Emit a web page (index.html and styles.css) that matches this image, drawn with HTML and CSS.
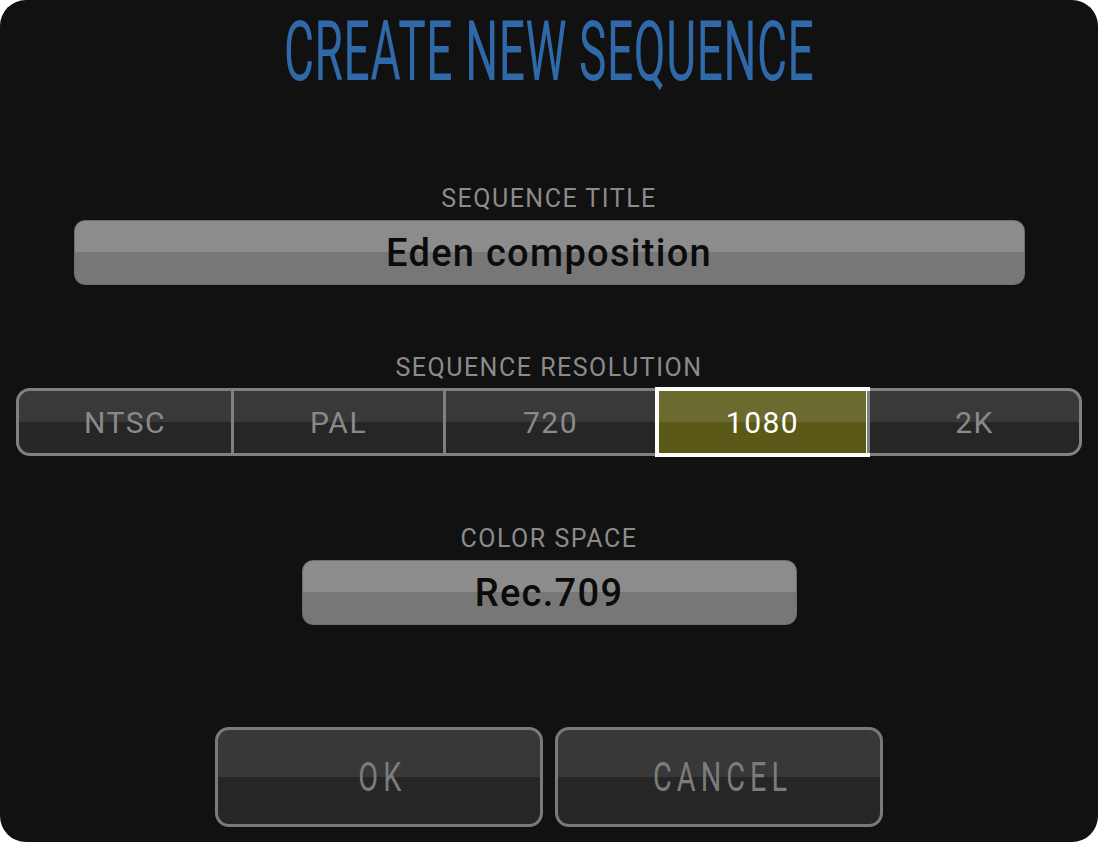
FILE: index.html
```html
<!DOCTYPE html>
<html>
<head>
<meta charset="utf-8">
<link rel="stylesheet" href="styles.css">
</head>
<body>
<div class="dialog">
  <h1 class="title"><span class="title-text">CREATE NEW SEQUENCE</span></h1>

  <div class="label label-first">SEQUENCE TITLE</div>
  <div class="field field-wide">Eden composition</div>

  <div class="label">SEQUENCE RESOLUTION</div>
  <div class="segmented">
    <div class="seg">NTSC</div>
    <div class="seg">PAL</div>
    <div class="seg">720</div>
    <div class="seg seg-selected">1080</div>
    <div class="seg">2K</div>
  </div>

  <div class="label">COLOR SPACE</div>
  <div class="field field-narrow">Rec.709</div>

  <div class="actions">
    <div class="btn"><span class="btn-text">OK</span></div>
    <div class="btn"><span class="btn-text">CANCEL</span></div>
  </div>
</div>
</body>
</html>
```

FILE: styles.css
```css
html, body {
  margin: 0;
  padding: 0;
  background: #ffffff;
}

.dialog {
  width: 1098px;
  height: 842px;
  box-sizing: border-box;
  background: #111111;
  border-radius: 26px;
  display: flex;
  flex-direction: column;
  align-items: center;
  padding-top: 10px;
  font-family: Roboto, "DejaVu Sans", sans-serif;
}

.title {
  margin: 0;
  height: 84px;
  font-size: 84px;
  line-height: 84px;
  font-weight: 400;
  color: #2f69a9;
  white-space: nowrap;
  display: flex;
  justify-content: center;
}

.title-text {
  display: inline-block;
  transform: scaleX(0.55);
  transform-origin: center;
  letter-spacing: 1px;
}

.label {
  margin-top: 71px;
  height: 24px;
  font-size: 25px;
  line-height: 24px;
  color: #8b8b8b;
  letter-spacing: 1.5px;
  white-space: nowrap;
}

.label-first {
  margin-top: 93px;
}

.field {
  margin-top: 9px;
  height: 65px;
  box-sizing: border-box;
  border-radius: 11px;
  background: linear-gradient(#8c8c8c 0, #8c8c8c 50%, #777777 50%, #777777 100%);
  border: 1px solid #6e6e6e;
  display: flex;
  align-items: center;
  justify-content: center;
  font-size: 38px;
  font-weight: 500;
  letter-spacing: 1.3px;
  color: #0b0b0b;
  white-space: nowrap;
}

.field-wide {
  width: 951px;
}

.field-narrow {
  width: 495px;
}

.segmented {
  margin-top: 8px;
  width: 1066px;
  height: 68px;
  box-sizing: border-box;
  border: 3px solid #808080;
  border-radius: 14px;
  display: grid;
  grid-template-columns: repeat(5, 1fr);
  background: linear-gradient(#393939 0, #393939 50%, #262626 50%, #262626 100%);
}

.seg {
  position: relative;
  display: flex;
  align-items: center;
  justify-content: center;
  font-size: 30px;
  letter-spacing: 1.5px;
  color: #8a8a8a;
  border-left: 3px solid #808080;
}

.seg:first-child {
  border-left: none;
  border-radius: 11px 0 0 11px;
}

.seg:last-child {
  border-radius: 0 11px 11px 0;
}

.seg-selected {
  background: linear-gradient(#6b6b2f 0, #6b6b2f 50%, #5a5917 50%, #5a5917 100%);
  color: #ffffff;
}

.seg-selected::after {
  content: "";
  position: absolute;
  top: -4px;
  bottom: -4px;
  left: -3px;
  right: -3px;
  border: 4px solid #ffffff;
  box-sizing: border-box;
}

.actions {
  margin-top: 102px;
  display: flex;
  gap: 12px;
}

.btn {
  width: 328px;
  height: 100px;
  box-sizing: border-box;
  border: 3px solid #7a7a7a;
  border-radius: 14px;
  background: linear-gradient(#383838 0, #383838 50%, #262626 50%, #262626 100%);
  display: flex;
  align-items: center;
  justify-content: center;
  color: #7c7c7c;
  font-size: 40px;
}

.btn-text {
  display: inline-block;
  transform: scaleX(0.72);
  letter-spacing: 7px;
  margin-right: -7px;
  white-space: nowrap;
}
```
